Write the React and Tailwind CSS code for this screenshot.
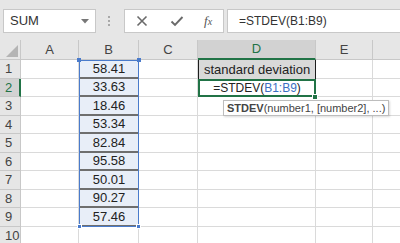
import React from 'react';

const values = ['58.41', '33.63', '18.46', '53.34', '82.84', '95.58', '50.01', '90.27', '57.46'];

const cellFont = { fontFamily: '"Liberation Sans", Arial, sans-serif' };

function FormulaButtons() {
    return (
        <div className="flex items-center h-[24px] w-[100px] ml-[14px] bg-white border border-[#c8c8c8]">
            {/* cancel */}
            <svg width="12" height="12" viewBox="0 0 12 12" className="ml-[11px]">
                <path d="M1.5 1.5 L10.5 10.5 M10.5 1.5 L1.5 10.5" stroke="#6a6a6a" strokeWidth="1.6" />
            </svg>
            {/* enter */}
            <svg width="14" height="12" viewBox="0 0 14 12" className="ml-[22px]">
                <path d="M1.5 6.5 L5 10 L12.5 2" stroke="#6a6a6a" strokeWidth="1.9" fill="none" />
            </svg>
            <span className="ml-[20px] text-[13px] italic text-[#555]" style={{ fontFamily: '"Liberation Serif", serif' }}>
                f<span className="text-[10px]">x</span>
            </span>
        </div>
    );
}

export default function App() {
    return (
        <div className="w-[400px] h-[243px] overflow-hidden bg-white select-none" style={cellFont}>
            {/* Formula bar */}
            <div className="h-[40px] bg-[#e6e6e6] flex items-start pt-[9px]">
                <div className="ml-[3px] w-[93px] h-[24px] bg-white border border-[#c8c8c8] flex items-center justify-between pl-[6px] pr-[6px]">
                    <span className="text-[13px] text-[#333]">SUM</span>
                    <svg width="8" height="5" viewBox="0 0 8 5">
                        <path d="M0 0 L8 0 L4 4.5 Z" fill="#777" />
                    </svg>
                </div>
                <div className="ml-[12px] mt-[7px] flex flex-col gap-[2px]">
                    <div className="w-[2px] h-[2px] bg-[#a8a8a8]" />
                    <div className="w-[2px] h-[2px] bg-[#a8a8a8]" />
                    <div className="w-[2px] h-[2px] bg-[#a8a8a8]" />
                </div>
                <FormulaButtons />
                <div className="ml-[3px] flex-1 h-[24px] bg-white border border-[#c8c8c8] border-r-0 flex items-center pl-[11px]">
                    <span className="text-[12px] text-[#333]">=STDEV(B1:B9)</span>
                </div>
            </div>

            {/* Grid */}
            <div className="relative">
                {/* Column headers */}
                <div className="flex h-[20px] bg-[#e6e6e6] text-[13px] text-[#444]">
                    <div className="w-[21px] border-r border-[#c8c8c8] border-b relative">
                        <svg width="12" height="12" viewBox="0 0 12 12" className="absolute right-[2px] bottom-[2px]">
                            <path d="M12 0 L12 12 L0 12 Z" fill="#b4b4b4" />
                        </svg>
                    </div>
                    <div className="w-[58px] border-r border-b border-[#c8c8c8] flex items-center justify-center">A</div>
                    <div className="w-[60px] border-r border-b border-[#c8c8c8] flex items-center justify-center">B</div>
                    <div className="w-[59px] border-r border-b border-[#c8c8c8] flex items-center justify-center">C</div>
                    <div className="w-[118px] border-r border-[#c8c8c8] border-b-2 border-b-[#217346] bg-[#d2d2d2] text-[#217346] flex items-center justify-center">D</div>
                    <div className="w-[57px] border-r border-b border-[#c8c8c8] flex items-center justify-center">E</div>
                    <div className="flex-1 border-b border-[#c8c8c8]" />
                </div>

                {/* Rows */}
                {Array.from({ length: 10 }).map((_, i) => {
                    const n = i + 1;
                    const v = values[i];
                    return (
                        <div key={n} className="flex h-[18.5px] text-[13px]">
                            <div
                                className={
                                    n === 2
                                        ? 'w-[21px] bg-[#d2d2d2] text-[#217346] border-r-2 border-r-[#217346] border-b border-b-[#c8c8c8] pl-[5px] flex items-center'
                                        : 'w-[21px] bg-[#e6e6e6] text-[#444] border-r border-b border-[#c8c8c8] pl-[5px] flex items-center'
                                }
                            >
                                {n}
                            </div>
                            <div className="w-[58px] border-r border-b border-[#dadada]" />
                            <div
                                className={
                                    v
                                        ? 'w-[60px] bg-[#e8eef8] border-b-2 border-b-[#6e6e6e] flex items-center justify-center text-[#222]'
                                        : 'w-[60px] border-r border-b border-[#dadada]'
                                }
                            >
                                {v}
                            </div>
                            <div className="w-[59px] border-r border-b border-[#dadada]" />
                            {n === 1 ? (
                                <div className="w-[118px] bg-[#d9d9d9] border-x border-[#1e1e1e] flex items-center justify-center text-[#222]">
                                    standard deviation
                                </div>
                            ) : n === 2 ? (
                                <div className="w-[118px] border-2 border-[#217346] flex items-center justify-center text-[12px] text-[#222]">
                                    =STDEV(<span className="text-[#3b6fc2]">B1:B9</span>)
                                </div>
                            ) : (
                                <div className="w-[118px] border-r border-b border-[#dadada]" />
                            )}
                            <div className="w-[57px] border-r border-b border-[#dadada]" />
                            <div className="flex-1 border-b border-[#dadada]" />
                        </div>
                    );
                })}

                {/* Selected range B1:B9 */}
                <div className="absolute left-[79px] top-[20px] w-[60px] h-[167px] border-[1.5px] border-[#4a7bcb] pointer-events-none" />
                <div className="absolute left-[77px] top-[18px] w-[4px] h-[4px] bg-[#4a7bcb]" />
                <div className="absolute left-[137px] top-[18px] w-[4px] h-[4px] bg-[#4a7bcb]" />
                <div className="absolute left-[77px] top-[184px] w-[5px] h-[5px] bg-[#4a7bcb] border border-white" />
                <div className="absolute left-[136px] top-[184px] w-[5px] h-[5px] bg-[#4a7bcb] border border-white" />

                {/* Fill handle of D2 */}
                <div className="absolute left-[312px] top-[54px] w-[6px] h-[6px] bg-[#217346] border border-white" />

                {/* Function tooltip */}
                <div className="absolute left-[223px] top-[60px] h-[16px] px-[3px] bg-white border border-[#bdbdbd] shadow-[1px_1px_2px_rgba(0,0,0,0.15)] flex items-center text-[11px] text-[#444] whitespace-nowrap">
                    <span className="font-bold">STDEV</span>(number1, [number2], ...)
                </div>
            </div>
        </div>
    );
}
